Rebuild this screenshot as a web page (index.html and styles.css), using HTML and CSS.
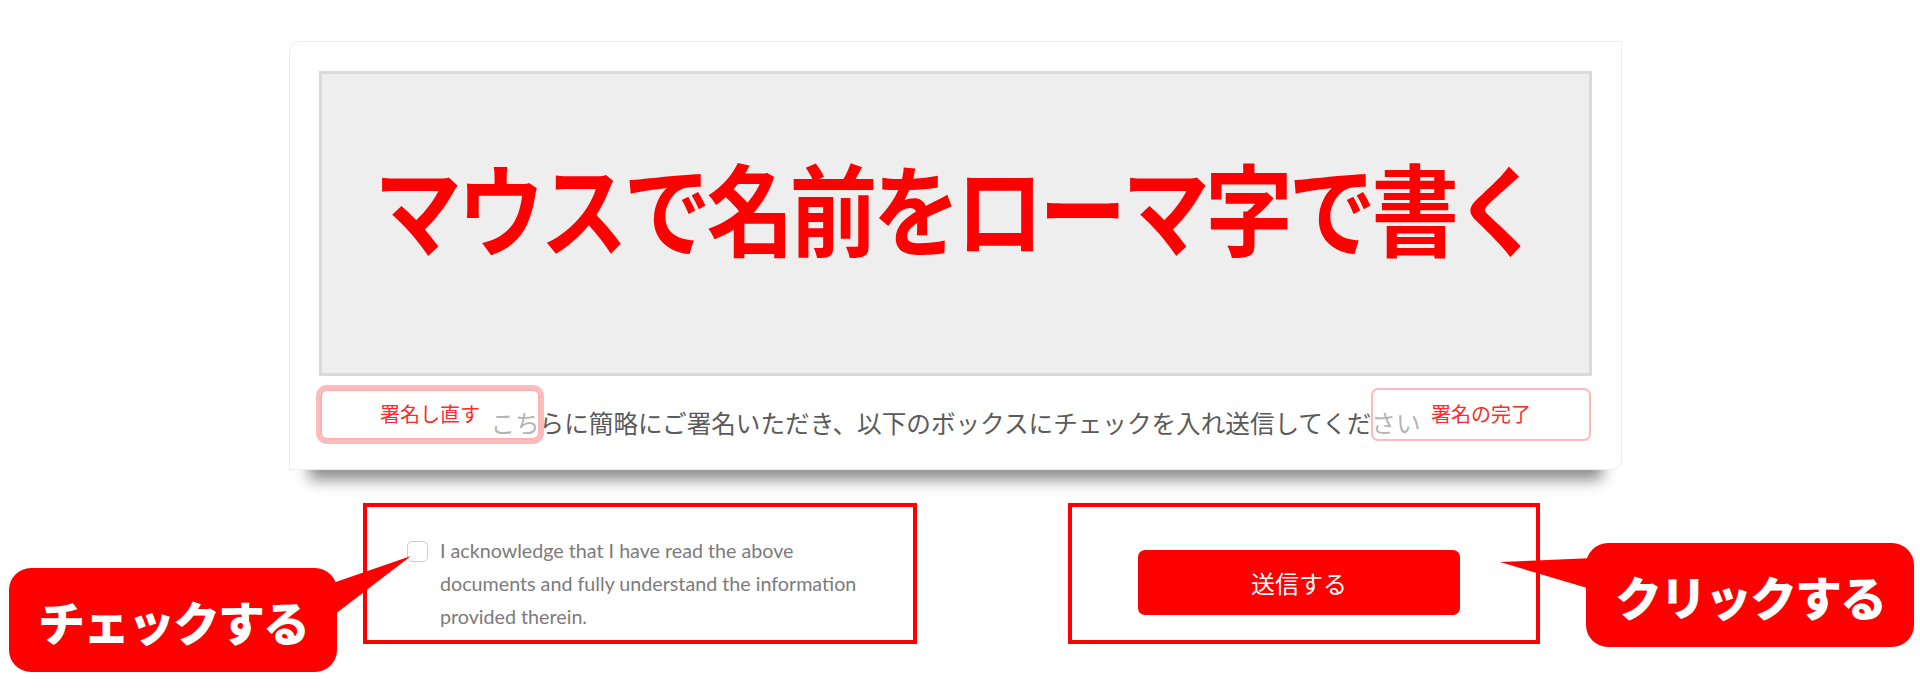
FILE: index.html
```html
<!DOCTYPE html>
<html lang="ja">
<head>
  <meta charset="UTF-8">
  <title>署名</title>
  <link rel="stylesheet" href="styles.css">
</head>
<body>

  <div class="page">

    <div class="sign-card">
      <div class="sign-pad">
        <span class="pad-label">マウスで名前をローマ字で書く</span>
      </div>
      <div class="sign-footer">
        <p class="sign-hint">こちらに簡略にご署名いただき、以下のボックスにチェックを入れ送信してください</p>
        <button class="btn-sign btn-clear">署名し直す</button>
        <button class="btn-sign btn-done">署名の完了</button>
      </div>
    </div>

    <div class="actions">
      <div class="mark-box agree-box">
        <label class="agree">
          <input type="checkbox">
          <span>I acknowledge that I have read the above documents and fully understand the information provided therein.</span>
        </label>
      </div>
      <div class="mark-box submit-box">
        <button class="btn-submit">送信する</button>
      </div>
    </div>

    <!-- 注釈の吹き出し -->
    <div class="callout callout-check">チェックする</div>
    <div class="callout callout-click">クリックする</div>
    <svg class="tails" width="1920" height="688" viewBox="0 0 1920 688">
      <polygon points="411,556 330,584 330,618" fill="#ff0000"/>
      <polygon points="1500,562 1594,558 1594,590" fill="#ff0000"/>
    </svg>

  </div>

</body>
</html>
```

FILE: styles.css
```css
* {
  box-sizing: border-box;
}

body {
  margin: 0;
  background-color: #fff;
  font-family: "Noto Sans CJK JP", sans-serif;
}

.page {
  position: relative;
  width: 1920px;
  height: 688px;
  padding-top: 41px;
}

.sign-card {
  width: 1333px;
  margin-left: 289px;
  padding: 29px 29px 0;
  background-color: #fff;
  border: 1px solid #ececec;
  border-radius: 10px 0 10px 0;
  box-shadow: 0 30px 14px -20px rgba(0,0,0,0.45);
}

.sign-pad {
  height: 305px;
  background-color: #eeeeee;
  border: 3px solid #dadada;
  display: flex;
  justify-content: center;
  align-items: center;
  padding-bottom: 36px;
}

.pad-label {
  display: inline-block;
  color: #ff0000;
  font-weight: 700;
  font-size: 100px;
  letter-spacing: -5px;
  line-height: 1;
  transform: scaleX(0.875);
  white-space: nowrap;
}

.sign-footer {
  position: relative;
  height: 93px;
}

.sign-hint {
  margin: 0;
  padding-top: 29px;
  text-align: center;
  font-size: 24.6px;
  line-height: 34px;
  color: #5a5a5a;
}

.btn-sign {
  position: absolute;
  width: 220px;
  background-color: rgba(255,255,255,0.55);
  color: #ff2a2a;
  font-family: "Noto Sans CJK JP", sans-serif;
  font-size: 20px;
  border-radius: 7px;
  cursor: pointer;
  padding: 0 0 2px;
}

.btn-clear {
  left: 1px;
  top: 13px;
  height: 51px;
  border: 2px solid #ffb2b2;
  box-shadow: 0 0 0 4px rgba(255,120,120,0.5);
}

.btn-done {
  right: 1px;
  top: 12px;
  height: 53px;
  border: 2px solid #ffb9b9;
}

.actions {
  display: flex;
  margin: 33px 0 0 363px;
  gap: 151px;
}

.mark-box {
  height: 141px;
  border: 4px solid #ff0000;
}

.agree-box {
  width: 554px;
  padding: 27px 0 0 40px;
}

.agree {
  display: flex;
  align-items: flex-start;
  gap: 12px;
  font-family: "Lato", sans-serif;
  font-size: 19.7px;
  line-height: 33px;
  color: #7b7b7b;
  cursor: pointer;
}

.agree input {
  appearance: none;
  flex: none;
  width: 21px;
  height: 21px;
  margin: 7px 0 0;
  border: 1.5px solid #c9ccd3;
  border-radius: 5px;
  background-color: #fff;
}

.agree span {
  width: 446px;
}

.submit-box {
  width: 472px;
  padding: 43px 0 0 66px;
}

.btn-submit {
  width: 322px;
  height: 65px;
  background-color: #ff0000;
  color: #fff;
  border: none;
  border-radius: 7px;
  font-family: "Noto Sans CJK JP", sans-serif;
  font-size: 24px;
  cursor: pointer;
}

.callout {
  position: absolute;
  background-color: #ff0000;
  color: #fff;
  font-weight: 900;
  font-size: 47px;
  border-radius: 22px;
  display: flex;
  justify-content: center;
  align-items: center;
  letter-spacing: -2px;
  line-height: 1;
}

.callout-check {
  left: 9px;
  top: 568px;
  width: 328px;
  height: 104px;
}

.callout-click {
  left: 1586px;
  top: 543px;
  width: 328px;
  height: 104px;
}

.tails {
  position: absolute;
  left: 0;
  top: 0;
  pointer-events: none;
}
```
